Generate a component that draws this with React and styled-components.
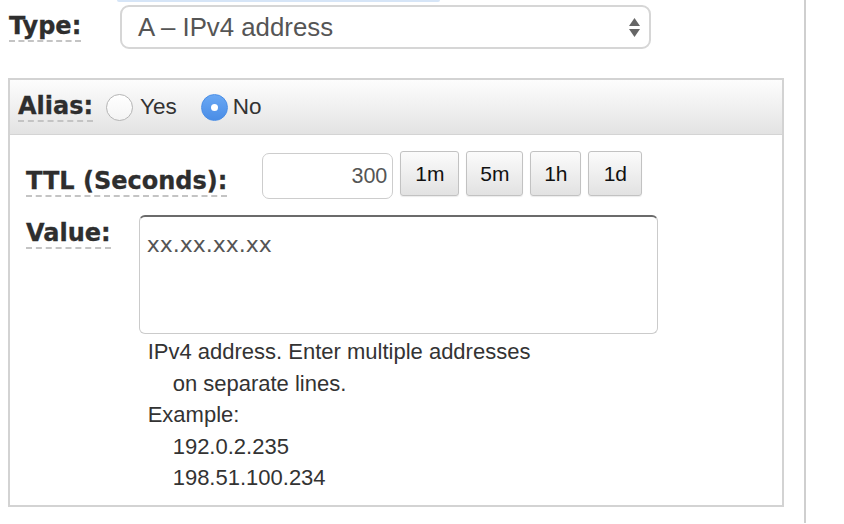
import React from "react";
import styled, { createGlobalStyle } from "styled-components";

const Global = createGlobalStyle`
  html, body { margin: 0; padding: 0; background: #fff; }
  body { font-family: "Liberation Sans", Arial, sans-serif; }
  * { box-sizing: border-box; }
`;

const Page = styled.div`
  display: flex;
  height: 524px;
  background: #fff;
  overflow: hidden;
`;

const Main = styled.div`
  width: 804px;
  padding-left: 8px;
  display: flex;
  flex-direction: column;
`;

const Divider = styled.div`
  width: 2px;
  height: 523px;
  background: #cfcfcf;
`;

const TopStrip = styled.div`
  margin-left: 109px;
  width: 323px;
  height: 2px;
  background: #d6e5f7;
  border-radius: 0 0 2px 2px;
`;

const TypeRow = styled.div`
  margin-top: 3px;
  display: grid;
  grid-template-columns: 112px 531px;
  align-items: center;
  height: 44px;
`;

const FieldLabel = styled.span`
  display: inline-block;
  justify-self: start;
  align-self: ${(p) => p.$align || "center"};
  margin-left: ${(p) => p.$ml || 0}px;
  margin-top: ${(p) => p.$mt || 0}px;
  font-family: "DejaVu Sans", Verdana, sans-serif;
  font-weight: bold;
  font-size: 24px;
  color: #2e2e2e;
  border-bottom: 2px dashed #c4c4c4;
  line-height: normal;
  white-space: nowrap;
  -webkit-text-stroke: 0.3px #2e2e2e;
`;

const Select = styled.div`
  position: relative;
  height: 44px;
  border: 2px solid #d6d6d6;
  border-radius: 9px;
  background: #fff;
  display: flex;
  align-items: center;
  padding-left: 16px;
  font-size: 25.8px;
  color: #555;
`;

const Arrows = styled.svg`
  position: absolute;
  right: 8px;
  top: 10px;
`;

const Panel = styled.div`
  margin-top: 29px;
  width: 776px;
  height: 429px;
  border: 2px solid #d3d3d3;
  display: flex;
  flex-direction: column;
`;

const Header = styled.div`
  height: 55px;
  border-bottom: 1px solid #d4d4d4;
  background: linear-gradient(#fdfdfd, #e3e3e3);
  display: flex;
  align-items: center;
  padding-left: 8px;
`;

const RadioOption = styled.label`
  display: flex;
  align-items: center;
  gap: ${(p) => p.$gap}px;
  margin-left: ${(p) => p.$ml}px;
  font-size: 22.5px;
  color: #333;
`;

const RadioCircle = styled.span`
  width: 27px;
  height: 27px;
  border-radius: 50%;
  display: flex;
  align-items: center;
  justify-content: center;
  border: 1px solid ${(p) => (p.$checked ? "#4a8ee6" : "#b5b5b5")};
  background: ${(p) =>
    p.$checked ? "linear-gradient(#6aa8f4, #4a8de6)" : "linear-gradient(#fff, #f4f4f4)"};
  &::after {
    content: "";
    display: ${(p) => (p.$checked ? "block" : "none")};
    width: 7px;
    height: 7px;
    border-radius: 50%;
    background: #fff;
  }
`;

const Body = styled.div`
  padding: 16px 0 0 16px;
  display: flex;
  flex-direction: column;
`;

const Row = styled.div`
  display: flex;
  align-items: flex-start;
  margin-top: ${(p) => p.$mt || 0}px;
`;

const TTLInput = styled.div`
  margin-left: 35px;
  margin-top: 2px;
  width: 131px;
  height: 46px;
  border: 1.5px solid #cdcdcd;
  border-radius: 7px;
  display: flex;
  align-items: center;
  justify-content: flex-end;
  padding-right: 5px;
  font-size: 21.5px;
  color: #555;
`;

const Buttons = styled.div`
  display: flex;
  gap: 7px;
  margin-left: 7px;
`;

const QuickButton = styled.button`
  height: 45px;
  width: ${(p) => p.$w}px;
  padding: 0;
  border: 1px solid #c2c2c2;
  border-radius: 3px;
  background: linear-gradient(#fbfbfb, #e2e2e2);
  font-family: "Liberation Sans", Arial, sans-serif;
  font-size: 21px;
  color: #111;
  box-shadow: 0 1px 1px rgba(0, 0, 0, 0.08);
`;

const ValueCol = styled.div`
  margin-left: 28px;
  display: flex;
  flex-direction: column;
`;

const TextArea = styled.textarea`
  width: 519px;
  height: 119px;
  border: 1.5px solid #cbcbcb;
  border-top: 2px solid #6b6b6b;
  border-radius: 6px;
  padding: 15px 7px 9px;
  resize: none;
  font-family: "DejaVu Sans", Verdana, sans-serif;
  font-size: 22px;
  color: #555;
  outline: none;
  line-height: 1.2;
`;

const Help = styled.div`
  margin-top: 2px;
  padding-left: 9px;
  font-size: 22px;
  line-height: 31.5px;
  color: #333;
`;

const HelpLine = styled.div`
  padding-left: ${(p) => (p.$indent ? 25 : 0)}px;
`;

export default function App() {
  return (
    <>
      <Global />
      <Page>
        <Main>
          <TopStrip />
          <TypeRow>
            <FieldLabel $ml={1}>Type:</FieldLabel>
            <Select>
              A – IPv4 address
              <Arrows width="13" height="22" viewBox="0 0 13 22">
                <path d="M6.5 1 L12 9 L1 9 Z" fill="#666" />
                <path d="M1 12 L12 12 L6.5 20 Z" fill="#666" />
              </Arrows>
            </Select>
          </TypeRow>
          <Panel>
            <Header>
              <FieldLabel>Alias:</FieldLabel>
              <RadioOption $gap={7} $ml={13}>
                <RadioCircle />
                Yes
              </RadioOption>
              <RadioOption $gap={5} $ml={24}>
                <RadioCircle $checked />
                No
              </RadioOption>
            </Header>
            <Body>
              <Row>
                <FieldLabel $align="flex-start" $mt={16}>
                  TTL (Seconds):
                </FieldLabel>
                <TTLInput>300</TTLInput>
                <Buttons>
                  <QuickButton $w={59}>1m</QuickButton>
                  <QuickButton $w={57}>5m</QuickButton>
                  <QuickButton $w={51}>1h</QuickButton>
                  <QuickButton $w={54}>1d</QuickButton>
                </Buttons>
              </Row>
              <Row $mt={16}>
                <FieldLabel $align="flex-start" $mt={4}>
                  Value:
                </FieldLabel>
                <ValueCol>
                  <TextArea defaultValue="xx.xx.xx.xx" />
                  <Help>
                    <HelpLine>IPv4 address. Enter multiple addresses</HelpLine>
                    <HelpLine $indent>on separate lines.</HelpLine>
                    <HelpLine>Example:</HelpLine>
                    <HelpLine $indent>192.0.2.235</HelpLine>
                    <HelpLine $indent>198.51.100.234</HelpLine>
                  </Help>
                </ValueCol>
              </Row>
            </Body>
          </Panel>
        </Main>
        <Divider />
      </Page>
    </>
  );
}
